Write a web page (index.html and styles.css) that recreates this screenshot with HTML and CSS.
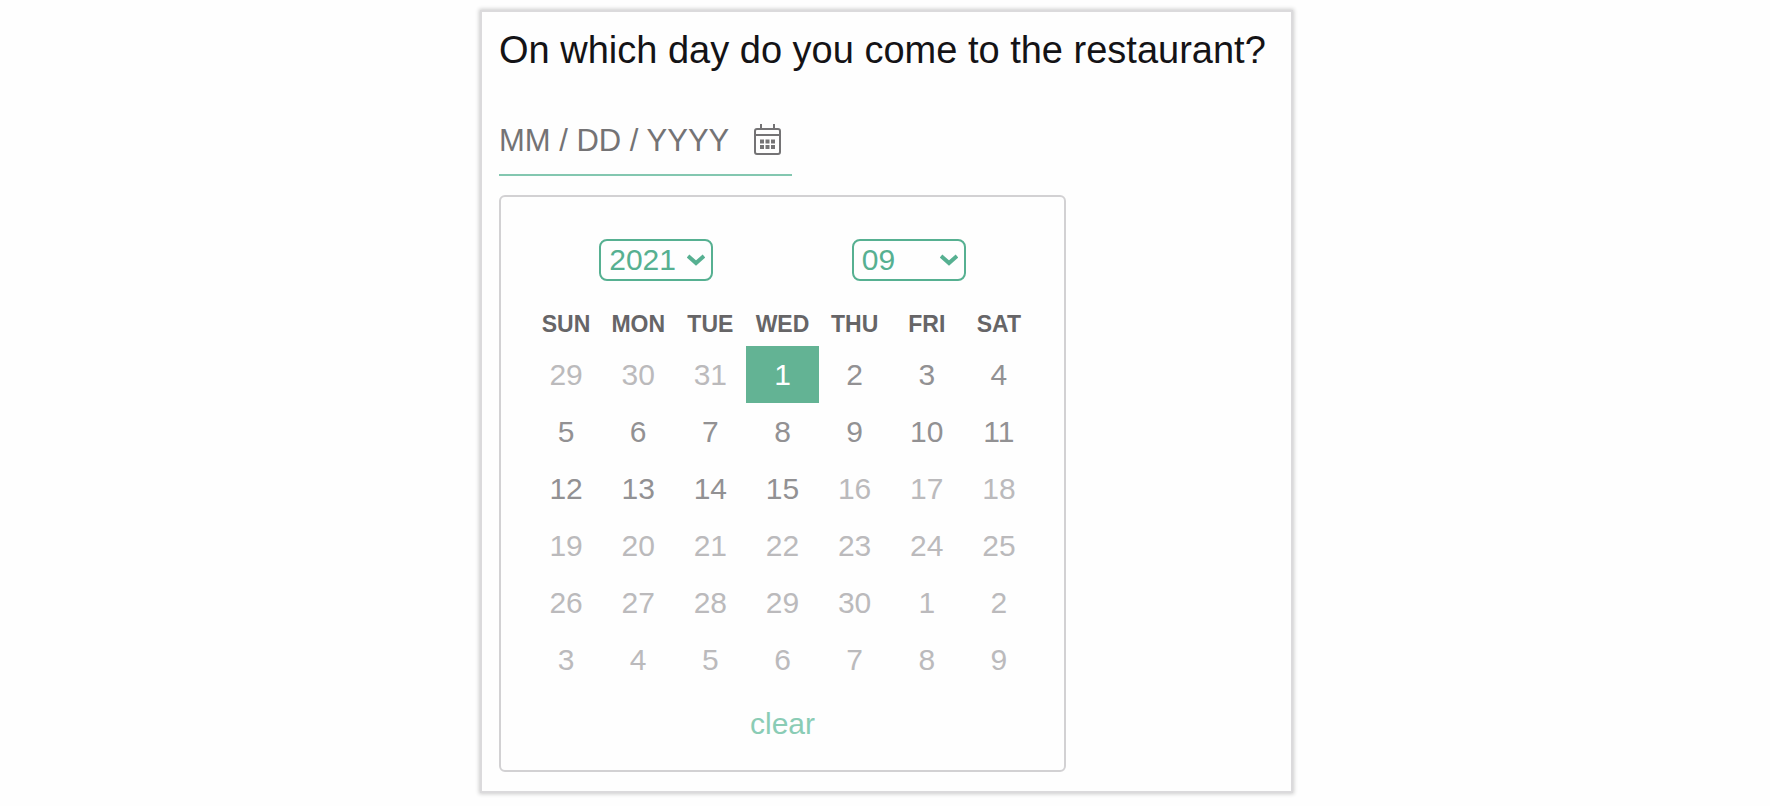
FILE: index.html
```html
<!DOCTYPE html>
<html lang="en">
<head>
    <meta charset="UTF-8">
    <meta name="viewport" content="width=device-width, initial-scale=1">
    <title>Restaurant reservation</title>
    <link rel="stylesheet" href="styles.css">
</head>
<body>
    <div class="question">
        <label class="question-title" for="date">On which day do you come to the restaurant?</label>

        <div class="date-field">
            <input type="text" id="date" placeholder="MM / DD / YYYY">
            <button type="button" class="date-toggle" aria-label="Open calendar">
                <svg width="27" height="31" viewBox="0 0 27 31" fill="none" stroke="#747375" stroke-width="2">
                    <rect x="1" y="5" width="25" height="25" rx="2"/>
                    <path d="M1 11H26M7 0V5M20 0V5"/>
                    <path d="M6 17.500H21M6 23H21" stroke-width="4" stroke-dasharray="4 1.500"/>
                </svg>
            </button>
        </div>

        <div class="calendar">
            <div class="selects">
                <div class="select">
                    <select id="year" aria-label="Year">
                        <option>2020</option>
                        <option selected>2021</option>
                        <option>2022</option>
                    </select>
                    <svg width="18" height="12" viewBox="0 0 18 12" fill="none" stroke="#56b091" stroke-width="4"><path d="M1 2L9 9L17 2"/></svg>
                </div>
                <div class="select">
                    <select id="month" aria-label="Month">
                        <option>08</option>
                        <option selected>09</option>
                        <option>10</option>
                    </select>
                    <svg width="18" height="12" viewBox="0 0 18 12" fill="none" stroke="#56b091" stroke-width="4"><path d="M1 2L9 9L17 2"/></svg>
                </div>
            </div>

            <table class="days">
                <thead>
                    <tr><th>SUN</th><th>MON</th><th>TUE</th><th>WED</th><th>THU</th><th>FRI</th><th>SAT</th></tr>
                </thead>
                <tbody>
                    <tr>
                        <td><button disabled>29</button></td>
                        <td><button disabled>30</button></td>
                        <td><button disabled>31</button></td>
                        <td><button class="selected">1</button></td>
                        <td><button>2</button></td>
                        <td><button>3</button></td>
                        <td><button>4</button></td>
                    </tr>
                    <tr>
                        <td><button>5</button></td>
                        <td><button>6</button></td>
                        <td><button>7</button></td>
                        <td><button>8</button></td>
                        <td><button>9</button></td>
                        <td><button>10</button></td>
                        <td><button>11</button></td>
                    </tr>
                    <tr>
                        <td><button>12</button></td>
                        <td><button>13</button></td>
                        <td><button>14</button></td>
                        <td><button>15</button></td>
                        <td><button disabled>16</button></td>
                        <td><button disabled>17</button></td>
                        <td><button disabled>18</button></td>
                    </tr>
                    <tr>
                        <td><button disabled>19</button></td>
                        <td><button disabled>20</button></td>
                        <td><button disabled>21</button></td>
                        <td><button disabled>22</button></td>
                        <td><button disabled>23</button></td>
                        <td><button disabled>24</button></td>
                        <td><button disabled>25</button></td>
                    </tr>
                    <tr>
                        <td><button disabled>26</button></td>
                        <td><button disabled>27</button></td>
                        <td><button disabled>28</button></td>
                        <td><button disabled>29</button></td>
                        <td><button disabled>30</button></td>
                        <td><button disabled>1</button></td>
                        <td><button disabled>2</button></td>
                    </tr>
                    <tr>
                        <td><button disabled>3</button></td>
                        <td><button disabled>4</button></td>
                        <td><button disabled>5</button></td>
                        <td><button disabled>6</button></td>
                        <td><button disabled>7</button></td>
                        <td><button disabled>8</button></td>
                        <td><button disabled>9</button></td>
                    </tr>
                </tbody>
            </table>

            <button type="button" class="clear">clear</button>
        </div>
    </div>
</body>
</html>
```

FILE: styles.css
```css
* {
    box-sizing: border-box;
}

body {
    margin: 0;
    padding: 10px 8px 10px 11px;
    background-color: #fefefe;
    font-family: "Liberation Sans", Arial, sans-serif;
    font-size: 30px;
}

button,
input,
select {
    font: inherit;
}

button {
    padding: 0;
    border: none;
    background: none;
    cursor: pointer;
}

.question {
    max-width: 813px;
    margin: 0 auto;
    padding: 16px 16px 19px 17px;
    border: 2px solid #dbdadc;
    background-color: #fefefe;
    box-shadow: 0 0 4px 1px rgba(0, 0, 0, 0.2);
}

.question-title {
    display: block;
    font-size: 38px;
    line-height: 44px;
    color: #141316;
}

.date-field {
    display: flex;
    align-items: center;
    width: 293px;
    height: 72px;
    max-width: 100%;
    margin: 32px 0 19px;
    border-bottom: 2px solid #83c7b0;
}

.date-field input {
    flex: 1;
    min-width: 0;
    padding: 4px 0 0;
    border: none;
    outline: none;
    background: none;
    font-size: 31px;
    color: #747375;
}

.date-field input::placeholder {
    color: #747375;
}

.date-toggle {
    display: flex;
    margin-right: 11px;
}

.calendar {
    max-width: 567px;
    padding: 42px 29px 29px;
    border: 2px solid #d2d1d3;
    border-radius: 6px;
    text-align: center;
}

.selects {
    display: grid;
    grid-template-columns: 1fr 1fr;
    justify-items: center;
    margin-bottom: 21px;
}

.select {
    position: relative;
}

.select select {
    display: block;
    width: 114px;
    height: 42px;
    padding: 0 8px 2px;
    border: 2px solid #56b091;
    border-radius: 8px;
    background: none;
    color: #56b091;
    appearance: none;
}

.select svg {
    position: absolute;
    right: 8px;
    top: 15px;
    pointer-events: none;
}

.days {
    width: 100%;
    table-layout: fixed;
    border-collapse: collapse;
}

.days th {
    height: 44px;
    padding: 0;
    font-size: 23px;
    color: #666567;
}

.days td {
    padding: 0;
}

.days button {
    display: block;
    width: 100%;
    height: 57px;
    color: #929193;
}

.days button:disabled {
    color: #bbbabc;
    cursor: default;
}

.days button.selected {
    background-color: #63b394;
    color: #fff;
}

.clear {
    margin-top: 19px;
    line-height: 34px;
    color: #8accb5;
}
```
